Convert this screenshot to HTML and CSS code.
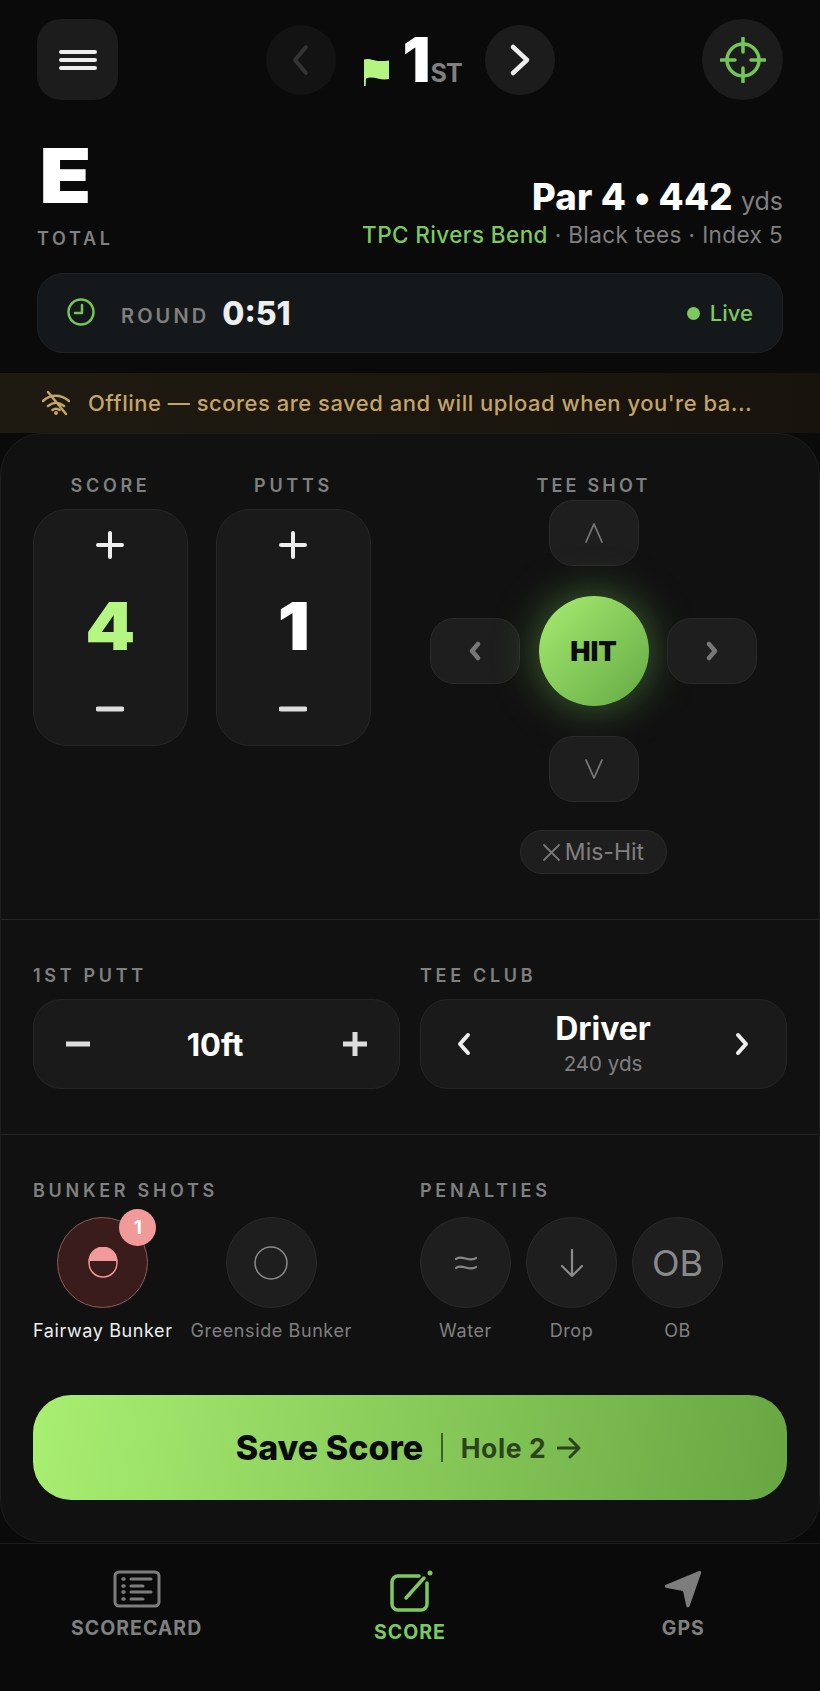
FILE: index.html
```html
<!DOCTYPE html>
<html lang="en">
<head>
<meta charset="utf-8">
<title>Score</title>
<link rel="stylesheet" href="styles.css">
</head>
<body>
<div class="app">
  <header class="top">
    <button class="menu-btn" aria-label="Menu">
      <svg width="38" height="24" viewBox="0 0 38 24"><path d="M2 4h34M2 12h34M2 20h34" class="ico-white"/></svg>
    </button>
    <div class="hole-nav">
      <button class="round-btn dim" aria-label="Previous">
        <svg width="24" height="34" viewBox="0 0 24 34"><path d="M17 4L6 17l11 13" class="ico-dim"/></svg>
      </button>
      <div class="hole-id">
        <svg class="flag" width="28" height="28" viewBox="0 0 28 28"><path d="M1 1.500C7-1 12 5 26 2.500V21C17 23 10 17 3 20.500L2.700 28H1Z" fill="#b4f582"/></svg>
        <span class="hole-num">1</span><span class="hole-suf">ST</span>
      </div>
      <button class="round-btn" aria-label="Next">
        <svg width="24" height="34" viewBox="0 0 24 34"><path d="M5 4l14 13L5 30" class="ico-next"/></svg>
      </button>
    </div>
    <button class="target-btn" aria-label="Locate">
      <svg width="46" height="46" viewBox="0 0 46 46"><g class="ico-green"><circle cx="23" cy="23" r="16"/><path d="M23 1v14M23 31v14M1 23h14M31 23h14"/></g></svg>
    </button>
  </header>

  <section class="summary">
    <div class="total">
      <div class="total-val">E</div>
      <div class="total-lbl">TOTAL</div>
    </div>
    <div class="hole-info">
      <div class="par">Par 4 • 442 <span class="yds">yds</span></div>
      <div class="course"><span class="course-name">TPC Rivers Bend</span> · Black tees · Index 5</div>
    </div>
  </section>

  <section class="round-bar">
    <svg class="clock" width="28" height="28" viewBox="0 0 28 28"><g class="ico-green-thin"><circle cx="14" cy="14" r="12.500"/><path d="M15 7v8H8"/></g></svg>
    <span class="round-lbl">ROUND</span>
    <span class="round-time">0:51</span>
    <span class="live"><i class="live-dot"></i>Live</span>
  </section>

  <div class="offline">
    <svg width="28" height="26" viewBox="0 0 28 26"><g class="ico-amber"><path d="M1 11C8 4 19 4 27 11M6 16c5-4 11-4 16 0M10.500 20c2-1.500 5-1.500 7 0M6 2l18 22"/></g><circle cx="14" cy="23" r="2" fill="#c4a468"/></svg>
    <span class="offline-txt">Offline — scores are saved and will upload when you're ba...</span>
  </div>

  <main class="panel">
    <section class="sec-top">
      <div class="counters">
        <div class="counter">
          <div class="lbl center">SCORE</div>
          <div class="stepper">
            <svg class="step-ico" width="28" height="28" viewBox="0 0 28 28"><path d="M2 14h24M14 2v24" class="ico-plus"/></svg>
            <span class="count green">4</span>
            <svg class="step-ico" width="28" height="6" viewBox="0 0 28 6"><path d="M2 3h24" class="ico-minus"/></svg>
          </div>
        </div>
        <div class="counter">
          <div class="lbl center">PUTTS</div>
          <div class="stepper">
            <svg class="step-ico" width="28" height="28" viewBox="0 0 28 28"><path d="M2 14h24M14 2v24" class="ico-plus"/></svg>
            <span class="count">1</span>
            <svg class="step-ico" width="28" height="6" viewBox="0 0 28 6"><path d="M2 3h24" class="ico-minus"/></svg>
          </div>
        </div>
      </div>
      <div class="tee">
        <div class="lbl center tee-lbl">TEE SHOT</div>
        <div class="dpad">
          <button class="pad pad-up"><svg width="18" height="20" viewBox="0 0 18 20"><path d="M1 19L9 1l8 18" class="ico-thin"/></svg></button>
          <button class="pad pad-left"><svg width="14" height="20" viewBox="0 0 14 20"><path d="M10 3L4 10l6 7" class="ico-bold"/></svg></button>
          <button class="hit">HIT</button>
          <button class="pad pad-right"><svg width="14" height="20" viewBox="0 0 14 20"><path d="M4 3l6 7-6 7" class="ico-bold"/></svg></button>
          <button class="pad pad-down"><svg width="18" height="20" viewBox="0 0 18 20"><path d="M1 1l8 18 8-18" class="ico-thin"/></svg></button>
        </div>
        <button class="mishit"><svg width="17" height="17" viewBox="0 0 17 17"><path d="M1 1l15 15M16 1L1 16" class="ico-thin"/></svg>Mis-Hit</button>
      </div>
    </section>

    <section class="sec-mid">
      <div class="field">
        <div class="lbl">1ST PUTT</div>
        <div class="select">
          <svg width="24" height="6" viewBox="0 0 24 6"><path d="M0 3h24" class="ico-thick"/></svg>
          <span class="select-val">10ft</span>
          <svg width="24" height="24" viewBox="0 0 24 24"><path d="M0 12h24M12 0v24" class="ico-thick"/></svg>
        </div>
      </div>
      <div class="field">
        <div class="lbl">TEE CLUB</div>
        <div class="select select-club">
          <svg width="14" height="24" viewBox="0 0 14 24"><path d="M11 3L3 12l8 9" class="ico-club"/></svg>
          <div class="club"><div class="club-name">Driver</div><div class="club-yds">240 yds</div></div>
          <svg width="14" height="24" viewBox="0 0 14 24"><path d="M3 3l8 9-8 9" class="ico-club"/></svg>
        </div>
      </div>
    </section>

    <section class="sec-low">
      <div class="field">
        <div class="lbl">BUNKER SHOTS</div>
        <div class="chips chips-bunker">
          <div class="chip">
            <div class="disc disc-on">
              <svg width="32" height="32" viewBox="0 0 32 32"><circle cx="16" cy="16" r="14" fill="none" stroke="#f09a9a" stroke-width="1.500"/><path d="M1.500 14a14.500 14.500 0 0 1 29 0Z" fill="#f09a9a"/></svg>
              <span class="badge">1</span>
            </div>
            <span class="chip-lbl on">Fairway Bunker</span>
          </div>
          <div class="chip">
            <div class="disc"><svg width="34" height="34" viewBox="0 0 34 34"><circle cx="17" cy="17" r="16" class="ico-ring"/></svg></div>
            <span class="chip-lbl">Greenside Bunker</span>
          </div>
        </div>
      </div>
      <div class="field">
        <div class="lbl">PENALTIES</div>
        <div class="chips chips-pen">
          <div class="chip">
            <div class="disc"><svg width="22" height="20" viewBox="0 0 22 20"><path d="M1 6c5-5 14 4 20-1M1 15c5-5 14 4 20-1" class="ico-thin2"/></svg></div>
            <span class="chip-lbl">Water</span>
          </div>
          <div class="chip">
            <div class="disc"><svg width="24" height="28" viewBox="0 0 24 28"><path d="M12 1v25M2 17l10 10 10-10" class="ico-thin2"/></svg></div>
            <span class="chip-lbl">Drop</span>
          </div>
          <div class="chip">
            <div class="disc disc-txt">OB</div>
            <span class="chip-lbl">OB</span>
          </div>
        </div>
      </div>
    </section>

    <button class="save">
      <span class="save-main">Save Score</span><i class="save-sep"></i><span class="save-next">Hole 2</span>
      <svg width="24" height="22" viewBox="0 0 24 22"><path d="M1 11h21M13 2l9 9-9 9" class="ico-arrow"/></svg>
    </button>
  </main>

  <nav class="tabs">
    <a class="tab">
      <svg class="tab-ico" width="48" height="38" viewBox="0 0 48 38"><rect x="2" y="2" width="44" height="34" rx="4" class="ico-tab"/><path d="M18 9h20M18 16h12M18 22h20M18 29h12" class="ico-tab"/><path d="M10 9h1M10 16h1M10 22h1M10 29h1" class="ico-tab-dot"/></svg>
      <span class="tab-lbl">SCORECARD</span>
    </a>
    <a class="tab tab-on">
      <svg class="tab-ico" width="44" height="42" viewBox="0 0 44 42"><path d="M29 6H8a6 6 0 0 0-6 6v22a6 6 0 0 0 6 6h23a6 6 0 0 0 6-6V13" class="ico-tab-g"/><path d="M16 28L34 8" class="ico-pen"/><circle cx="40" cy="3" r="2.500" fill="#7cc95f"/></svg>
      <span class="tab-lbl">SCORE</span>
    </a>
    <a class="tab">
      <svg class="tab-ico" width="40" height="40" viewBox="0 0 40 40"><path d="M37 1c1.500-.5 2.500.5 2 2.500L27 38c-1 2-3 2-3.500 0L20 22 3 19c-2.500-.7-2.500-2.500-1-3.500Z" fill="#7d7d7d"/></svg>
      <span class="tab-lbl">GPS</span>
    </a>
  </nav>
</div>
</body>
</html>
```

FILE: styles.css
```css
* { box-sizing: border-box; }
html, body { margin: 0; padding: 0; background: #0a0a0a; }
body { font-family: Inter, "Liberation Sans", sans-serif; color: #fff; }
button { font-family: inherit; border: 0; padding: 0; color: inherit; }
svg { display: block; flex: none; }
path, circle, rect { stroke-linecap: round; stroke-linejoin: round; }

.app { width: 820px; height: 1691px; display: flex; flex-direction: column; background: #0a0a0a; overflow: hidden; }

.top { display: flex; justify-content: space-between; align-items: center; padding: 19px 37px 0; }
.menu-btn { width: 81px; height: 81px; border-radius: 24px; background: #1c1c1c; display: flex; align-items: center; justify-content: center; }
.target-btn { width: 81px; height: 81px; border-radius: 50%; background: #1c1c1c; display: flex; align-items: center; justify-content: center; }
.hole-nav { display: flex; align-items: center; }
.round-btn { width: 70px; height: 70px; border-radius: 50%; background: #1c1c1c; display: flex; align-items: center; justify-content: center; }
.round-btn.dim { background: #131313; }
.hole-id { width: 149px; display: flex; align-items: flex-end; height: 50px; padding-left: 27px; }
.flag { margin-right: 12px; margin-bottom: -1px; }
.hole-num { font-size: 62px; font-weight: 900; line-height: 50px; height: 50px; letter-spacing: -1px; }
.hole-suf { font-size: 25px; font-weight: 700; color: #808080; line-height: 24px; margin: 0 0 0 1px; letter-spacing: -0.8px; }

.ico-white { fill: none; stroke: #eee; stroke-width: 4; }
.ico-dim { fill: none; stroke: #333; stroke-width: 4; }
.ico-next { fill: none; stroke: #eee; stroke-width: 4.500; }
.ico-green { fill: none; stroke: #74c457; stroke-width: 3.500; }
.ico-green-thin { fill: none; stroke: #74c457; stroke-width: 2.500; }
.ico-amber { fill: none; stroke: #c4a468; stroke-width: 2.500; }
.ico-plus { fill: none; stroke: #eee; stroke-width: 4; }
.ico-minus { fill: none; stroke: #ddd; stroke-width: 5; }
.ico-thin { fill: none; stroke: #777; stroke-width: 1.800; }
.ico-thin2 { fill: none; stroke: #8a8a8a; stroke-width: 2.200; }
.ico-bold { fill: none; stroke: #777; stroke-width: 4.500; }
.ico-thick { fill: none; stroke: #ddd; stroke-width: 5; stroke-linecap: butt; }
.ico-club { fill: none; stroke: #eee; stroke-width: 4; }
.ico-ring { fill: none; stroke: #8a8a8a; stroke-width: 1.500; }
.ico-arrow { fill: none; stroke: #2b441c; stroke-width: 3; }
.ico-tab { fill: none; stroke: #7d7d7d; stroke-width: 3; }
.ico-tab-dot { fill: none; stroke: #7d7d7d; stroke-width: 3.500; }
.ico-tab-g { fill: none; stroke: #7cc95f; stroke-width: 3.500; }
.ico-pen { fill: none; stroke: #7cc95f; stroke-width: 3.500; }

.summary { display: flex; justify-content: space-between; align-items: flex-end; padding: 0 37px; margin-top: 34px; }
.total-val { font-size: 76px; font-weight: 900; line-height: 82px; padding-left: 2px; transform: scaleX(1.12); transform-origin: left center; }
.total-lbl { font-size: 18px; font-weight: 600; letter-spacing: 3.700px; color: #808080; line-height: 20px; margin-top: 13px; }
.hole-info { text-align: right; margin-bottom: 1px; }
.par { font-size: 36.500px; font-weight: 800; line-height: 40px; letter-spacing: 0.200px; }
.yds { font-size: 25px; font-weight: 400; color: #808080; letter-spacing: 0; }
.course { font-size: 22.500px; letter-spacing: 0.400px; color: #808080; line-height: 26px; margin-top: 1px; }
.course-name { color: #7cc95f; font-weight: 500; }

.round-bar { margin: 24px 37px 0; height: 80px; border-radius: 26px; background: #15181a; border: 1px solid #1f2225; display: flex; align-items: center; padding: 0 29px; }
.clock { margin-top: -3px; }
.round-lbl { font-size: 20px; font-weight: 600; color: #808080; letter-spacing: 3.100px; margin-left: 26px; padding-top: 5px; }
.round-time { font-size: 32px; font-weight: 800; color: #eee; margin-left: 13px; }
.live { margin-left: auto; display: flex; align-items: center; gap: 10px; color: #7cc95f; font-size: 22px; font-weight: 500; }
.live-dot { width: 13px; height: 13px; border-radius: 50%; background: #7cc95f; }

.offline { margin-top: 20px; height: 60px; flex: none; background: linear-gradient(90deg, #1f1a11, #18140d); display: flex; align-items: center; padding: 0 0 1px 42px; gap: 18px; }
.offline-txt { font-size: 22px; letter-spacing: 0.500px; font-weight: 500; color: #c4a468; white-space: nowrap; }

.panel { width: 820px; height: 1109px; flex: none; background: #111; border: 1px solid #1d1d1d; border-radius: 42px; display: flex; flex-direction: column; }

.lbl { font-size: 18px; font-weight: 600; color: #808080; letter-spacing: 3.700px; line-height: 20px; }
.lbl.center { text-align: center; }

.sec-top { height: 486px; padding: 42px 32px 0; display: flex; border-bottom: 1px solid #262626; }
.counters { display: flex; gap: 28px; }
.counter { width: 155px; }
.stepper { margin-top: 13px; height: 237px; border: 1px solid #262626; border-radius: 34px; background: #1a1a1a; display: flex; flex-direction: column; align-items: center; padding: 21px 0 33px; justify-content: space-between; }
.step-ico { margin-right: 2px; }
.count { font-size: 66px; font-weight: 900; line-height: 70px; margin-bottom: 14px; transform: scaleX(1.08); }
.count.green { color: #b5f582; }

.tee { margin-left: 59px; width: 327px; display: flex; flex-direction: column; align-items: center; }
.tee-lbl { margin-bottom: 4px; letter-spacing: 3.200px; }
.dpad { display: grid; grid-template-columns: 90px 110px 90px; column-gap: 18.500px; grid-template-rows: 66px 110px 66px; row-gap: 30px; place-items: center; grid-template-areas: ". u ." "l h r" ". d ."; }
.pad { width: 90px; height: 66px; border-radius: 24px; background: #1e1e1e; border: 1px solid #2a2a2a; display: flex; align-items: center; justify-content: center; }
.pad-up { grid-area: u; }
.pad-down { grid-area: d; }
.pad-left { grid-area: l; }
.pad-right { grid-area: r; }
.hit { grid-area: h; width: 110px; height: 110px; border-radius: 50%; color: #0c0c0c; font-size: 27px; font-weight: 900; background: linear-gradient(135deg, #a8ec72, #63aa44); box-shadow: 0 0 44px rgba(116, 196, 87, 0.5); }
.mishit { margin-top: 28px; width: 147px; height: 44px; border-radius: 22px; background: #1e1e1e; border: 1px solid #2a2a2a; color: #808080; font-size: 23px; display: flex; align-items: center; justify-content: center; gap: 5px; }

.sec-mid { height: 215px; padding: 46px 32px 0; display: grid; grid-template-columns: 367px 367px; column-gap: 20px; border-bottom: 1px solid #262626; }
.select { margin-top: 13px; height: 90px; border: 1px solid #262626; border-radius: 28px; background: #1a1a1a; display: flex; align-items: center; justify-content: space-between; padding: 0 32px; }
.select-val { font-size: 31px; font-weight: 700; margin-left: -3px; }
.select-club { padding: 0 37px 0 36px; }
.club { text-align: center; }
.club-name { font-size: 32px; font-weight: 700; line-height: 36px; margin-top: -2px; }
.club-yds { font-size: 20.500px; color: #808080; line-height: 24px; margin-top: 5px; }

.sec-low { padding: 46px 32px 0; display: grid; grid-template-columns: 367px 367px; column-gap: 20px; }
.chips { display: flex; margin-top: 16px; }
.chips-bunker { gap: 18px; }
.chips-pen { gap: 15px; }
.chip { display: flex; flex-direction: column; align-items: center; gap: 12px; }
.disc { position: relative; width: 91px; height: 91px; border-radius: 50%; background: #1e1e1e; border: 1.500px solid #2a2a2a; display: flex; align-items: center; justify-content: center; color: #8a8a8a; }
.disc-on { background: #3a1c1c; border-color: #8c5a5a; }
.disc-txt { font-size: 36px; }
.badge { position: absolute; top: -9px; right: -9px; width: 37px; height: 37px; border-radius: 50%; background: #f09a9a; color: #fff; font-size: 19px; font-weight: 700; display: flex; align-items: center; justify-content: center; }
.chip-lbl { font-size: 18px; color: #808080; line-height: 22px; white-space: nowrap; letter-spacing: 0.600px; }
.chip-lbl.on { color: #eee; }

.save { margin: 53px 32px 0; width: 754px; height: 105px; flex: none; border-radius: 38px; padding-right: 3px; background: linear-gradient(100deg, #a9ef72, #68a642); display: flex; align-items: center; justify-content: center; color: #0a0a0a; }
.save-main { font-size: 34px; font-weight: 800; }
.save-sep { width: 1.500px; height: 29px; background: #3d5f2a; margin: 0 18px; }
.save-next { font-size: 26.500px; letter-spacing: 0.600px; font-weight: 700; color: #2b441c; margin-right: 11px; }

.tabs { flex: 1; display: grid; grid-template-columns: repeat(3, 1fr); border-top: 1px solid #1d1d1d; background: #0a0a0a; margin-top: 1px; }
.tab { display: flex; flex-direction: column; align-items: center; padding-top: 26px; color: #808080; }
.tab-ico { height: 38px; }
.tab-lbl { font-size: 19.500px; font-weight: 700; letter-spacing: 1px; line-height: 22px; margin-top: 9px; }
.tab-on { color: #7cc95f; }
.tab-on .tab-ico { height: 42px; margin-left: 4px; }
```
